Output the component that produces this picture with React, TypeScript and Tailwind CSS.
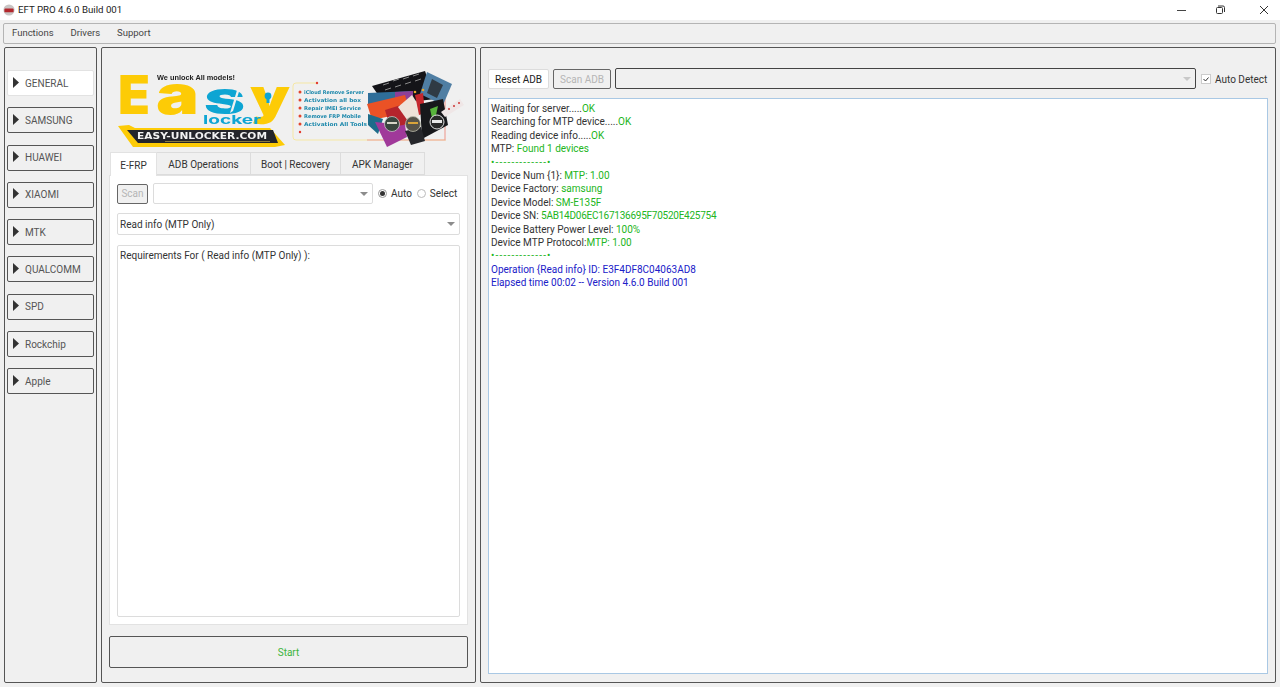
const vendors = ['GENERAL', 'SAMSUNG', 'HUAWEI', 'XIAOMI', 'MTK', 'QUALCOMM', 'SPD', 'Rockchip', 'Apple'];
const tabs = [
    { label: 'ADB Operations', width: 'w-[94px]' },
    { label: 'Boot | Recovery', width: 'w-[90px]' },
    { label: 'APK Manager', width: 'w-[84px]' },
];

const log = [
    { text: 'Waiting for server.....', value: 'OK' },
    { text: 'Searching for MTP device.....', value: 'OK' },
    { text: 'Reading device info.....', value: 'OK' },
    { text: 'MTP: ', value: 'Found 1 devices' },
    { text: '', value: '•-------------•', className: 'tracking-[1.2px]' },
    { text: 'Device Num {1}: ', value: 'MTP: 1.00' },
    { text: 'Device Factory: ', value: 'samsung' },
    { text: 'Device Model: ', value: 'SM-E135F' },
    { text: 'Device SN: ', value: '5AB14D06EC167136695F70520E425754', className: 'tracking-[-0.25px]' },
    { text: 'Device Battery Power Level: ', value: '100%' },
    { text: 'Device MTP Protocol:', value: 'MTP: 1.00' },
    { text: '', value: '•-------------•', className: 'tracking-[1.2px]' },
];

const services = [
    { label: 'iCloud Remove Server', y: 29, w: 60 },
    { label: 'Activation all box', y: 37, w: 57 },
    { label: 'Repair IMEI Service', y: 45, w: 57 },
    { label: 'Remove FRP Mobile', y: 53, w: 57 },
    { label: 'Activation All Tools', y: 61, w: 63 },
];

function Caret({ light }: { light?: boolean }) {
    return (
        <svg width="8" height="4" viewBox="0 0 8 4" className="shrink-0">
            <path d="M0 0h8L4 4z" fill={light ? '#c8c8c8' : '#8c8c8c'} />
        </svg>
    );
}

function Logo() {
    const big = { fontFamily: 'Inter', fontWeight: 900, lengthAdjust: 'spacingAndGlyphs' } as const;
    return (
        <svg width="365" height="83" viewBox="0 0 365 83" className="block blur-[0.35px]">
            {/* wordmark */}
            <text {...big} x="13" y="49" fontSize="54" fill="#fdcb06" textLength="32">E</text>
            <text {...big} x="51" y="49" fontSize="54" fill="#fdcb06" textLength="43">a</text>
            <text {...big} x="99" y="49" fontSize="34" fill="#0ea5d3" textLength="41">S</text>
            <text {...big} x="145" y="49" fontSize="50" fill="#fdcb06" textLength="40">y</text>
            <polygon points="133,22 136,20 128,46 125,48" fill="#f0f0f0" />
            <circle cx="163" cy="31" r="3.4" fill="#0ea5d3" />
            <rect x="161.5" y="32" width="3" height="6" fill="#0ea5d3" />
            <text {...big} x="98" y="59" fontSize="12" fontWeight="700" fill="#0ea5d3" textLength="58">locker</text>
            <text x="52" y="15" fontFamily="Liberation Sans" fontWeight="700" fontSize="7" fill="#222" textLength="78" lengthAdjust="spacingAndGlyphs">We unlock All models!</text>

            {/* url banner */}
            <polygon points="13,61 24,60 30,63 165,63 180,80 170,82 28,82" fill="#fdcb06" />
            <polygon points="22,65 168,65 173,78 33,78" fill="#24252b" />
            <text x="32" y="74" fontFamily="DejaVu Sans" fontWeight="700" fontSize="9" fill="#f2f2f2" textLength="130" lengthAdjust="spacingAndGlyphs">EASY-UNLOCKER.COM</text>
            <rect x="60" y="76" width="105" height="1" fill="#8a7a40" />

            {/* service list */}
            <path d="M194 18h-3a3 3 0 0 0-3 3v51a3 3 0 0 0 3 3h150" fill="none" stroke="#f5e7a4" strokeWidth="1" />
            <path d="M194 18h18" fill="none" stroke="#f5e7a4" strokeWidth="1" />
            <path d="M262 75h78v-44" fill="none" stroke="#eda49a" strokeWidth="1.2" />
            <circle cx="212" cy="18" r="1.2" fill="#e33b2e" />
            <circle cx="195" cy="67" r="1.2" fill="#e33b2e" />
            {services.map((s) => (
                <g key={s.label}>
                    <circle cx="195" cy={s.y - 2} r="1.5" fill="#e2452c" />
                    <text x="199" y={s.y} fontFamily="DejaVu Sans" fontWeight="700" fontSize="5.2" fill="#1a87ab" textLength={s.w} lengthAdjust="spacingAndGlyphs">{s.label}</text>
                </g>
            ))}

            {/* cards */}
            <polygon points="267,21 320,6 330,34 280,40" fill="#141418" />
            <path d="M278 20l6-2M288 16l6-2M298 14l6-2M308 11l6-2M280 25l6-2M290 22l6-2M300 19l6-2M310 16l6-2" stroke="#8a8a8a" strokeWidth="1" />
            <polygon points="322,7 347,19 338,40 315,29" fill="#4f7ea3" />
            <polygon points="327,14 338,20 332,33 322,28" fill="#2f3a44" />
            <circle cx="300" cy="29" r="1.3" fill="#e8a92c" />
            <circle cx="310" cy="27" r="1.3" fill="#e8a92c" />
            <circle cx="318" cy="25" r="1.3" fill="#e8a92c" />
            <polygon points="263,28 308,26 308,42 263,42" fill="#2f6e99" />
            <polygon points="290,27 308,26 308,42 290,42" fill="#8e3f98" />
            <polygon points="262,39 300,30 305,47 267,55" fill="#ea5226" />
            <polygon points="263,49 278,54 273,69 263,60" fill="#1e6c8a" />
            <polygon points="270,57 300,60 302,72 282,82" fill="#a0399a" />
            <polygon points="280,45 296,40 305,59 285,62" fill="#b4242c" />
            <polygon points="293,42 307,30 318,47 305,59" fill="#eee2d8" />
            <polygon points="310,30 318,28 320,48 314,50" fill="#c6272c" />
            <polygon points="315,39 338,34 343,60 317,74" fill="#17181b" />
            <polygon points="325,44 333,41 331,50 327,53" fill="#58b33c" />
            <polygon points="300,66 316,62 320,76 306,80" fill="#26272b" />
            <circle cx="287" cy="59" r="7.5" fill="#39463f" stroke="#c8c8c8" strokeWidth="0.8" />
            <rect x="282" y="57" width="10" height="2" fill="#d6d6c8" />
            <circle cx="308" cy="59" r="7.5" fill="#57544a" stroke="#b8b8a8" strokeWidth="0.8" />
            <rect x="303" y="57" width="10" height="2" fill="#d9a53a" />
            <circle cx="332" cy="57" r="7" fill="#2a2a2a" stroke="#e0e0e0" strokeWidth="1" />
            <rect x="327" y="55" width="10" height="3" fill="#e8e8e8" />
            <polygon points="336,47 355,34 359,40 340,52" fill="#efe6e6" />
            <circle cx="344" cy="44" r="1" fill="#c33" />
            <circle cx="349" cy="41" r="1" fill="#c33" />
            <circle cx="354" cy="38" r="1" fill="#c33" />
        </svg>
    );
}

export default function App() {
    return (
        <div className="flex h-[687px] w-[1280px] flex-col overflow-hidden bg-[#f0f0f0] text-[10px] text-[#333] [font-family:'Roboto','Noto_Sans',sans-serif]">
            <div className="flex h-[20px] shrink-0 items-center bg-white pl-[3px]">
                <svg width="12" height="12" viewBox="0 0 13 13" className="mr-[3px]">
                    <circle cx="6.5" cy="6.5" r="6" fill="#c9c4c4" />
                    <rect x="1.5" y="5" width="10" height="4" rx="1" fill="#b3262c" />
                </svg>
                <span className="text-[9.7px] text-[#222]">EFT PRO 4.6.0 Build 001</span>
                <div className="ml-auto flex items-center">
                    <span className="h-px w-[9px] bg-[#444]" />
                    <svg width="10" height="10" viewBox="0 0 10 10" className="ml-[29px]" fill="none" stroke="#333">
                        <rect x="1.5" y="2.5" width="6" height="6" rx="1" />
                        <path d="M3 1h5a1.5 1.5 0 0 1 1.5 1.5V7" />
                    </svg>
                    <svg width="10" height="10" viewBox="0 0 10 10" className="mr-[11px] ml-[34px]" stroke="#333">
                        <path d="M1 1l8 8M9 1L1 9" />
                    </svg>
                </div>
            </div>

            <div className="mt-[3px] mr-[4px] ml-[3px] flex h-[21px] shrink-0 items-center gap-[17px] rounded-[2px] border border-[#b4b4b4] pl-[8px] text-[9.5px] text-[#444]">
                <span>Functions</span>
                <span>Drivers</span>
                <span>Support</span>
            </div>

            <div className="mt-[3px] mr-[4px] ml-[4px] flex h-[636px] gap-[4px]">
                <aside className="flex w-[93px] shrink-0 flex-col gap-[11.3px] rounded-[2px] border border-[#555] px-[2px] pt-[22px]">
                    {vendors.map((name, i) => (
                        <div
                            key={name}
                            className={
                                i === 0
                                    ? 'flex h-[26px] items-center gap-[6px] rounded-[2px] border border-[#e2e2e2] bg-white pl-[5px]'
                                    : 'flex h-[26px] items-center gap-[6px] rounded-[2px] border border-[#555] pl-[5px]'
                            }
                        >
                            <svg width="6" height="11" viewBox="0 0 6 11" className="mb-[2px]">
                                <path d="M0 0l6 5.5L0 11z" fill="#333" />
                            </svg>
                            <span className="translate-y-[0.4px] text-[#555]">{name}</span>
                        </div>
                    ))}
                </aside>

                <main className="flex w-[375px] shrink-0 flex-col rounded-[2px] border border-[#555] px-[7px] pt-[17px]">
                    <div className="-mx-[4px] h-[83px]">
                        <Logo />
                    </div>
                    <div className="mt-[4px] flex h-[23px]">
                        <div className="z-10 -mb-px ml-px flex w-[47px] items-center justify-center border border-b-0 border-[#e2e2e2] bg-white pt-px">E-FRP</div>
                        {tabs.map((tab) => (
                            <div key={tab.label} className={`flex ${tab.width} items-center justify-center border border-l-0 border-[#dcdcdc] bg-[#f0f0f0] pt-px`}>
                                {tab.label}
                            </div>
                        ))}
                    </div>
                    <div className="flex h-[450px] flex-col border border-[#e2e2e2] bg-white px-[7px] pt-[7px] pb-[7px]">
                        <div className="flex h-[21px] items-center">
                            <div className="flex h-[20px] w-[31px] items-center justify-center rounded-[2px] border border-[#666] bg-[#f0f0f0] text-[#b5b5b5]">Scan</div>
                            <div className="ml-[5px] flex h-[21px] w-[220px] items-center justify-end rounded-[2px] border border-[#dcdcdc] bg-white pr-[4px]">
                                <Caret />
                            </div>
                            <span className="ml-[5px] flex h-[9px] w-[9px] items-center justify-center rounded-full border border-[#999]">
                                <span className="h-[5px] w-[5px] rounded-full bg-[#333]" />
                            </span>
                            <span className="ml-[4px]">Auto</span>
                            <span className="ml-[5px] h-[9px] w-[9px] rounded-full border border-[#bbb]" />
                            <span className="ml-[4px]">Select</span>
                        </div>
                        <div className="mt-[9px] flex h-[22px] items-center justify-between rounded-[2px] border border-[#dcdcdc] bg-white pr-[4px] pl-[2px]">
                            <span>Read info (MTP Only)</span>
                            <Caret />
                        </div>
                        <div className="mt-[10px] flex-1 rounded-[2px] border border-[#dcdcdc] bg-white px-[2px] py-[2px]">
                            Requirements For ( Read info (MTP Only) ):
                        </div>
                    </div>
                    <div className="mt-[11px] flex h-[32px] items-center justify-center rounded-[2px] border border-[#555] text-[#3cb43c]">Start</div>
                </main>

                <section className="flex min-w-0 flex-1 flex-col rounded-[2px] border border-[#555] px-[7px] pt-[20px]">
                    <div className="flex h-[21px] items-center">
                        <div className="flex h-[20px] w-[61px] shrink-0 items-center justify-center rounded-[2px] border border-[#dcdcdc] bg-white pt-px text-[#222]">Reset ADB</div>
                        <div className="ml-[4px] flex h-[20px] w-[58px] shrink-0 items-center justify-center rounded-[2px] border border-[#666] bg-[#f0f0f0] pt-px text-[#b5b5b5]">Scan ADB</div>
                        <div className="ml-[4px] flex h-[21px] w-[581px] shrink-0 items-center justify-end rounded-[2px] border border-[#444] bg-[#f0f0f0] pr-[4px]">
                            <Caret light />
                        </div>
                        <span className="ml-[5px] flex h-[10px] w-[10px] shrink-0 items-center justify-center border border-[#ccc] bg-white">
                            <svg width="8" height="8" viewBox="0 0 8 8" fill="none" stroke="#333">
                                <path d="M1.5 4l2 2 3-3.5" />
                            </svg>
                        </span>
                        <span className="ml-[4px] whitespace-nowrap pt-px">Auto Detect</span>
                    </div>
                    <div className="mt-[9px] h-[576px] border border-[#a9c8e4] bg-white pt-[3px] pl-[2px] leading-[13.4px]">
                        {log.map((line, i) => (
                            <div key={i} className="h-[13.4px] whitespace-nowrap">
                                {line.text}
                                <span className={`text-[#22b522] ${line.className ?? ''}`}>{line.value}</span>
                            </div>
                        ))}
                        <div className="h-[13.4px] text-[#2020c8]">Operation {'{Read info}'} ID: E3F4DF8C04063AD8</div>
                        <div className="h-[13.4px] text-[#2020c8]">Elapsed time 00:02 -- Version 4.6.0 Build 001</div>
                    </div>
                </section>
            </div>
        </div>
    );
}
